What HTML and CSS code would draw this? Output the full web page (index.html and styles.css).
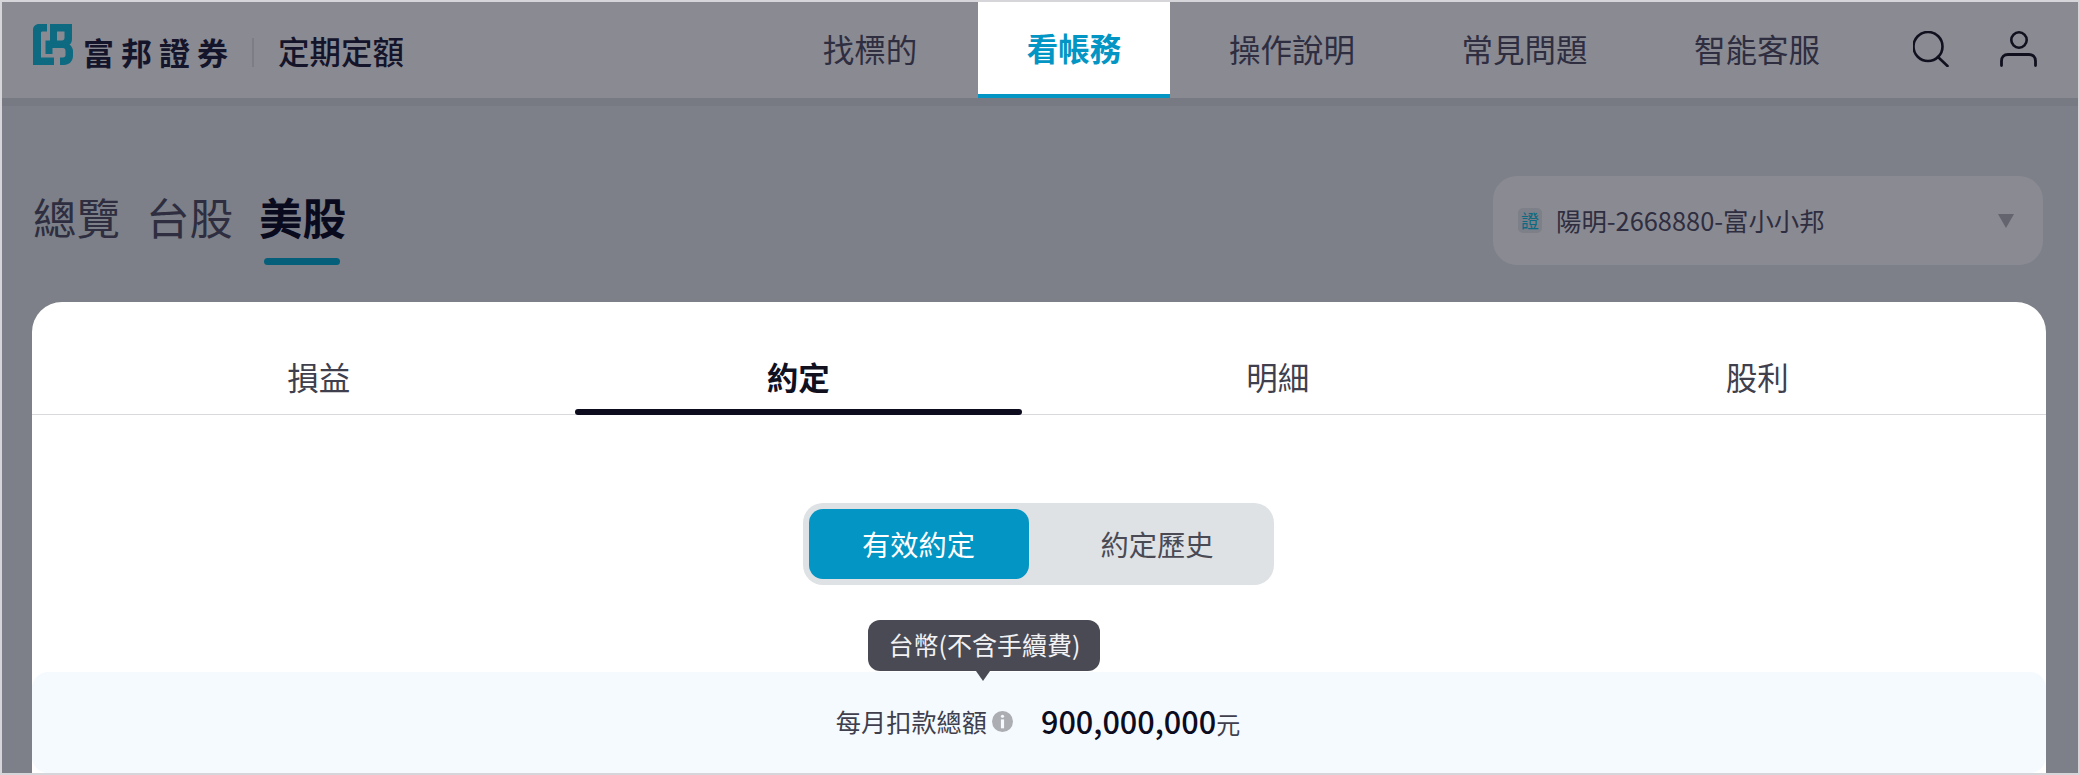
FILE: index.html
```html
<!DOCTYPE html>
<html lang="zh-Hant">
<head>
<meta charset="utf-8">
<title>定期定額</title>
<link rel="stylesheet" href="styles.css">
</head>
<body>
<div class="frame">
  <header class="topbar">
    <div class="brand">
      <svg class="logo" viewBox="0 0 40 41" aria-hidden="true">
        <path fill="#0e6a80" d="M14 0H6C2.500 0 0 2.500 0 6V41H21V33.500H8V9C8 8 8.500 7.500 9.500 7.500H14Z"/>
        <path fill="#0e6a80" fill-rule="evenodd" d="M17 0H39V15C39 18 38 19.500 36.500 20.500C38.500 22 40 24.500 40 27V32C40 37 36 41 31 41H27V33.500H30C31.500 33.500 32.500 32.500 32.500 31V27C32.500 25 31.500 24 30 24H19.500V30H12.500V16.500H17ZM24 7.500H31.500V14C31.500 15.500 30.500 16.500 29 16.500H24Z"/>
      </svg>
      <span class="brand-name">富邦證券</span>
      <span class="brand-divider"></span>
      <span class="brand-product">定期定額</span>
    </div>
    <nav class="nav">
      <a class="nav-item nav-find">找標的</a>
      <a class="nav-item nav-active">看帳務</a>
      <a class="nav-item nav-help">操作說明</a>
      <a class="nav-item nav-faq">常見問題</a>
      <a class="nav-item nav-bot">智能客服</a>
    </nav>
    <div class="actions">
      <svg class="icon" viewBox="0 0 36 36" aria-hidden="true">
        <circle cx="15" cy="15.500" r="14.500" fill="none" stroke="#10101f" stroke-width="2.600"/>
        <path d="M25 26L34.500 35" fill="none" stroke="#10101f" stroke-width="2.600" stroke-linecap="round"/>
      </svg>
      <svg class="icon icon-user" viewBox="0 0 37 36" aria-hidden="true">
        <circle cx="19" cy="9" r="7.700" fill="none" stroke="#10101f" stroke-width="2.600"/>
        <path d="M1.500 34.500V30C1.500 26 4 23.500 8 23.500H29C33 23.500 35.500 26 35.500 30V34.500" fill="none" stroke="#10101f" stroke-width="2.800" stroke-linecap="round"/>
      </svg>
    </div>
  </header>

  <main class="content">
    <div class="page-head">
      <div class="market-tabs">
        <a class="market-tab">總覽</a>
        <a class="market-tab">台股</a>
        <a class="market-tab market-active">美股</a>
      </div>
      <div class="account">
        <span class="badge">證</span>
        <span class="account-name">陽明-2668880-富小小邦</span>
        <span class="caret"></span>
      </div>
    </div>

    <section class="panel">
      <div class="tabs">
        <a class="tab">損益</a>
        <a class="tab tab-active">約定</a>
        <a class="tab">明細</a>
        <a class="tab">股利</a>
      </div>
      <div class="toggle-row">
        <div class="toggle">
          <a class="toggle-item toggle-active">有效約定</a>
          <a class="toggle-item toggle-other">約定歷史</a>
        </div>
      </div>
      <div class="summary">
        <span class="summary-label">每月扣款總額</span>
        <span class="info">
          <svg viewBox="0 0 20 20" aria-hidden="true">
            <circle cx="10" cy="10" r="10" fill="#acadb3"/>
            <rect x="8.500" y="3.500" width="3" height="3" rx="1.500" fill="#f5faff"/>
            <rect x="8.500" y="8" width="3" height="8.500" fill="#f5faff"/>
          </svg>
          <span class="tooltip">台幣(不含手續費)</span>
        </span>
        <span class="summary-value">900,000,000<small class="unit">元</small></span>
      </div>
    </section>
  </main>
</div>
</body>
</html>
```

FILE: styles.css
```css
* { box-sizing: border-box; }

html, body {
  margin: 0;
  padding: 0;
  height: 100%;
}

body {
  font-family: "Noto Sans CJK TC", "Noto Sans", sans-serif;
  color: #10101f;
}

.frame {
  height: 775px;
  border: 2px solid #d5d5da;
  background: #7d8088;
  overflow: hidden;
  display: flex;
  flex-direction: column;
}

/* top bar */
.topbar {
  height: 96px;
  flex: none;
  background: #8a8a93;
  display: flex;
  align-items: stretch;
  box-shadow: 0 8px 0 #777a82;
}

.brand {
  display: flex;
  align-items: center;
  padding-left: 31px;
  width: 800px;
  flex: none;
}

.logo {
  width: 40px;
  height: 41px;
  margin-top: -11px;
  flex: none;
}

.brand-name {
  margin-left: 10px;
  font-size: 31px;
  font-weight: 700;
  letter-spacing: 7px;
  line-height: 1;
  white-space: nowrap;
  color: #14142a;
  margin-top: 2px;
}

.brand-divider {
  width: 2px;
  height: 29px;
  margin-left: 17px;
  background: #7d7d87;
  margin-top: 4px;
}

.brand-product {
  margin-left: 24px;
  font-size: 31.500px;
  font-weight: 500;
  line-height: 1;
  white-space: nowrap;
  color: #14142a;
  margin-top: 2px;
}

.nav {
  display: flex;
  align-items: stretch;
  flex: none;
}

.nav-item {
  display: flex;
  align-items: center;
  justify-content: center;
  font-size: 31.500px;
  line-height: 1;
  padding-bottom: 3px;
  color: #2e2e40;
  white-space: nowrap;
}

.nav-find { width: 176px; padding-right: 40px; }
.nav-help { width: 232px; margin-left: 6px; }
.nav-faq { width: 233px; }
.nav-bot { width: 232px; }

.nav-active {
  width: 192px;
  background: #fff;
  color: #0395c3;
  font-weight: 700;
  border-bottom: 4px solid #0395c3;
  padding-bottom: 0;
  position: relative;
  z-index: 1;
}

.actions {
  display: flex;
  align-items: center;
  gap: 51px;
  margin-left: 40px;
  padding-bottom: 2px;
}

.icon {
  width: 36px;
  height: 36px;
  flex: none;
}

.icon-user {
  width: 37px;
}

/* page */
.content {
  flex: 1;
  display: flex;
  flex-direction: column;
  padding: 78px 32px 0 30px;
  min-height: 0;
}

.page-head {
  display: flex;
  justify-content: space-between;
  align-items: flex-start;
  height: 126px;
  flex: none;
}

.market-tabs {
  display: flex;
  gap: 26px;
  padding-left: 1px;
  padding-top: 15px;
}

.market-tab {
  font-size: 43.500px;
  line-height: 52px;
  color: #2e2e40;
  position: relative;
  white-space: nowrap;
}

.market-active {
  color: #0a0a1e;
  font-weight: 700;
}

.market-active::after {
  content: "";
  position: absolute;
  left: 5px;
  width: 76px;
  top: 67px;
  height: 7px;
  border-radius: 4px;
  background: #065f7a;
}

.account {
  width: 550px;
  height: 89px;
  background: #8a8a93;
  border-radius: 24px;
  display: flex;
  align-items: center;
  padding: 0 29px 0 25px;
  margin-right: 3px;
}

.badge {
  width: 24px;
  height: 25px;
  border-radius: 5px;
  background: #7d8088;
  color: #0c6a82;
  font-size: 18px;
  line-height: 25px;
  text-align: center;
  flex: none;
}

.account-name {
  margin-left: 14px;
  font-size: 25.400px;
  line-height: 1;
  color: #2e2e40;
  white-space: nowrap;
  flex: 1;
}

.caret {
  width: 0;
  height: 0;
  border-left: 8px solid transparent;
  border-right: 8px solid transparent;
  border-top: 14px solid #64646f;
}

/* panel */
.panel {
  flex: 1;
  background: #fff;
  border-radius: 30px 30px 0 0;
  display: flex;
  flex-direction: column;
  min-height: 0;
}

.tabs {
  display: flex;
  gap: 32px;
  padding: 0 65px 0 63px;
  height: 113px;
  flex: none;
  border-bottom: 1px solid #d8d8dd;
}

.tab {
  flex: 1;
  font-size: 31.500px;
  line-height: 30px;
  padding-top: 59px;
  text-align: center;
  color: #3f3f4d;
  position: relative;
  height: 113px;
}

.tab-active {
  color: #10101f;
  font-weight: 700;
}

.tab-active::after {
  content: "";
  position: absolute;
  left: 0;
  right: 0;
  bottom: 0;
  height: 6px;
  border-radius: 3px;
  background: #0c0c1e;
}

.toggle-row {
  display: flex;
  justify-content: center;
  padding: 88px 2px 87px 0;
  flex: none;
}

.toggle {
  width: 471px;
  height: 82px;
  background: #dee2e5;
  border-radius: 20px;
  padding: 6px 7px 6px 6px;
  display: flex;
}

.toggle-item {
  flex: 1;
  display: flex;
  align-items: center;
  justify-content: center;
  font-size: 28.300px;
  line-height: 1;
  color: #4a4a55;
  border-radius: 14px;
}

.toggle-active {
  flex: none;
  width: 220px;
  background: #0395c3;
  color: #fff;
}

.toggle-other {
  margin-left: 19px;
}

.summary {
  flex: 1;
  background: #f5faff;
  border-radius: 16px;
  display: flex;
  align-items: center;
  justify-content: center;
  padding: 0 2px 2px 0;
  min-height: 0;
}

.summary-label {
  font-size: 25.200px;
  line-height: 1;
  color: #3f3f4d;
  white-space: nowrap;
}

.info {
  width: 21px;
  height: 21px;
  margin-left: 5px;
  position: relative;
  flex: none;
}

.info svg {
  display: block;
  width: 21px;
  height: 21px;
}

.tooltip {
  position: absolute;
  left: 50%;
  bottom: 61px;
  transform: translateX(-134px);
  width: 232px;
  height: 51px;
  background: #4a4a55;
  color: #f2f2f4;
  border-radius: 12px;
  font-size: 25px;
  line-height: 49px;
  text-align: center;
  white-space: nowrap;
}

.tooltip::after {
  content: "";
  position: absolute;
  left: 108px;
  top: 51px;
  width: 0;
  height: 0;
  border-left: 7px solid transparent;
  border-right: 7px solid transparent;
  border-top: 10px solid #4a4a55;
}

.summary-value {
  margin-left: 28px;
  font-size: 30.600px;
  font-weight: 500;
  line-height: 1;
  color: #0c0c1e;
  white-space: nowrap;
}

.unit {
  font-size: 24px;
  font-weight: 400;
  color: #3f3f4d;
}
```
